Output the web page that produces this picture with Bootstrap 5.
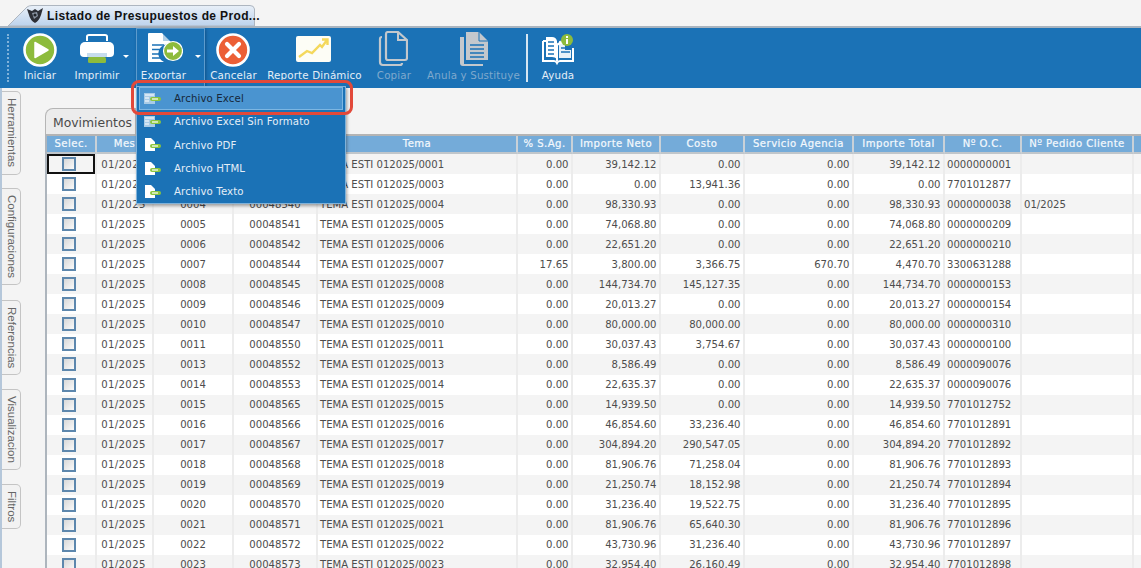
<!DOCTYPE html>
<html lang="es">
<head>
<meta charset="utf-8">
<title>Listado de Presupuestos</title>
<link href="https://cdn.jsdelivr.net/npm/bootstrap@5.3.0/dist/css/bootstrap.min.css" rel="stylesheet">
<style>
html,body{height:568px;overflow:hidden}
body{background:#f4f4f4;font-family:"DejaVu Sans","Noto Sans",sans-serif;font-size:10.3px;color:#4d4d4d}
.tabstrip{height:26px;padding-top:5px;padding-left:8px}
.doc-tab{position:relative;width:247px;height:21px}
.doc-tab svg.shape{position:absolute;inset:0}
.doc-tab .tab-logo{position:absolute;left:19px;top:3px}
.doc-tab .tab-title{position:absolute;left:39px;top:3px;font:bold 12px/16px "Liberation Sans",sans-serif;color:#111;letter-spacing:.36px;white-space:nowrap}
.toolbar{height:62px;background:#1b72b6;border-top:2px solid #a9b4bf;padding-left:7px;color:#fff}
.gripper{width:2px;height:48px;margin-top:6px;margin-right:5px;border-left:2px dotted #7fb2da}
.tool{position:relative;height:60px;text-align:center;flex:none}
.tool svg.ico{display:block;position:absolute;top:5px}
.tool .tlabel{position:absolute;left:0;right:0;top:40px;line-height:14px;white-space:nowrap;color:#e4eef7;letter-spacing:.15px}
.tool.off .tlabel{color:#7fa9cd}
.tool .drop{position:absolute;top:27px;width:0;height:0;border-left:3px solid transparent;border-right:3px solid transparent;border-top:3px solid #fff}
.tool.open{border:1px solid #5d9bcd;border-bottom:0;box-shadow:1px 1px 3px rgba(0,40,80,.45)}
.w-ini{width:52px}.w-imp{width:70px}.w-exp{width:69px}.w-can{width:57px}.w-rep{width:105px}.w-cop{width:54px}.w-anu{width:105px}.w-ayu{width:60px}
.tsep{width:2px;height:48px;margin-top:6px;background:#d7e6f2;flex:none}
.menu-export{position:absolute;left:-1px;top:57px;width:210px;min-width:0;height:118px;margin:0;padding:0 2px 1px;border:1px solid #7fb2da;border-radius:0;background:#1b72b6;box-shadow:1px 2px 3px rgba(0,0,0,.35);font-size:10.2px;letter-spacing:.12px;z-index:5;text-align:left}
.menu-export .dropdown-item{display:flex;align-items:center;height:23.3px;padding:0 0 0 5px;color:#e4eef7;gap:12px;white-space:nowrap}
.menu-export .dropdown-item.active{background:#4a94d0;color:#16283a;box-shadow:inset 0 0 0 1px #7db6e2}
.red-mark{position:absolute;left:-6px;top:-7px;width:222px;height:35px;border:3px solid #e2493a;border-radius:8px;pointer-events:none}
.workarea{height:480px}
.rail{width:22px;border-left:2px solid #b5c7da;padding-top:3px;flex:none}
.vtab{width:19px;writing-mode:vertical-rl;text-align:center;font:11.5px "Liberation Sans",sans-serif;color:#666;background:#f2f2f2;border:1px solid #c4c4c4;border-left:0;border-radius:0 5px 5px 0;line-height:17px}
.v1{height:84px;margin-bottom:13px}.v2{height:97px;margin-bottom:15px}.v3{height:75px;margin-bottom:14px}.v4{height:81px;margin-bottom:14px}.v5{height:45px}
.panel-area{padding-left:23px;padding-top:20px;flex:1;min-width:0}
.mov-tab{width:91px;height:27px;background:#ececec;border:1px solid #b5b5b5;border-bottom:0;border-radius:8px 0 0 0;font-size:12.4px;line-height:28px;padding-left:7px;color:#4a4a4a}
.grid-wrap{border-left:2px solid #adb5bd;border-top:2px solid #b4b4b4;overflow:hidden;height:460px;margin-top:-1px}
.grid{table-layout:fixed;width:1187px;margin:0;font-size:10.1px;border-collapse:separate;border-spacing:0}
.table.grid>*>*>*{padding:0;border:0;box-shadow:none}
.table.grid thead th{height:17px;background:#74abd9;color:#f4f9fd;font-weight:400;text-align:center;line-height:16px;border-right:2px solid #c9d1d8;border-bottom:2px solid #c0c6cb;white-space:nowrap;letter-spacing:.45px;-webkit-text-stroke:.2px #f4f9fd}
.table.grid tbody td{height:20.05px;line-height:19px;color:#4d4d4d;background:#fff;border-right:2px solid #ececec;white-space:nowrap;vertical-align:middle}
.table.grid tbody tr:nth-child(odd) td{background:#f4f4f4}
.table.grid td.c{text-align:center}
.table.grid td.c:nth-child(2){letter-spacing:.35px;padding-right:2px}
.table.grid td.c:first-child{padding-right:4px}
.table.grid td.n{text-align:right;padding-right:2.500px}
.table.grid td.l{padding-left:2px}
.table.grid td.lp{padding-left:2px}
.chk{display:block;width:14px;height:14px;margin:0 auto;border:2px solid #5d87ad;background:linear-gradient(135deg,#d8d8d8,#fafafa)}
.table.grid tbody tr:first-child td:first-child{box-shadow:inset 0 0 0 2px #111}
</style>
</head>
<body>
<svg width="0" height="0" class="d-block position-absolute">
<symbol id="m-sheet" viewBox="0 0 18 14">
<rect x="0" y="1" width="11" height="11" fill="#a9cbe6"/>
<path d="M1 3h9M1 6h4M1 9h4" stroke="#fff" stroke-width="1.2"/>
<rect x="6" y="5" width="11" height="4" rx="2" fill="#8cc63f"/><rect x="8" y="6.4" width="6" height="1.2" fill="#fff"/>
</symbol>
<symbol id="m-doc" viewBox="0 0 18 16">
<path d="M1 1h6l4 4v9H1z" fill="#fff"/>
<rect x="6" y="7" width="11" height="4" rx="2" fill="#8cc63f"/><rect x="8" y="8.4" width="6" height="1.2" fill="#fff"/>
</symbol>
</svg>

<div class="tabstrip d-flex">
  <div class="doc-tab">
    <svg class="shape" width="247" height="21" viewBox="0 0 247 21"><defs><linearGradient id="tg" x1="0" y1="0" x2="0" y2="1"><stop offset="0" stop-color="#e9f0f8"/><stop offset="1" stop-color="#bcd2ec"/></linearGradient></defs><path d="M0 21 L19 2 Q21 .5 24 .5 H242 Q246 .5 246.5 4 V21 Z" fill="url(#tg)" stroke="#aeb6c0"/></svg>
    <svg class="tab-logo" width="16" height="15" viewBox="0 0 16 15"><path d="M0 1 L5 3 L8 1 L11 3 L16 0 L14 7 Q12 13 8 15 Q3 12 2 7Z" fill="#2d2f36"/><path d="M5 5 L10 4 L11 8 L7 11Z" fill="#8d97a6"/><circle cx="8" cy="7" r="1.6" fill="#22252b"/></svg>
    <span class="tab-title">Listado de Presupuestos de Prod...</span>
  </div>
</div>

<div class="toolbar d-flex">
  <div class="gripper"></div>
  <div class="tool w-ini">
    <svg class="ico" style="left:9px" width="34" height="34" viewBox="0 0 34 34"><circle cx="17" cy="17" r="15.5" fill="#8dbb3c" stroke="#fff" stroke-width="2.6"/><path d="M12 9.5 L25 17 L12 24.5Z" fill="#fff" stroke="#fff" stroke-width="1.5" stroke-linejoin="round"/></svg>
    <div class="tlabel">Iniciar</div>
  </div>
  <div class="tool w-imp">
    <svg class="ico" style="left:13px" width="36" height="34" viewBox="0 0 36 34"><path d="M8 8V3.5Q8 2 10 2H26Q28 2 28 3.5V8" fill="none" stroke="#fff" stroke-width="2"/><rect x="1" y="9" width="34" height="14" rx="5" fill="#fff"/><rect x="1" y="15" width="34" height="9" rx="4" fill="#fff"/><rect x="9" y="24" width="18" height="6" rx="1.5" fill="#8dbb3c"/><rect x="8" y="20" width="20" height="4" fill="#1b72b6" opacity=".25"/></svg>
    <div class="tlabel" style="right:8px">Imprimir</div>
    <span class="drop" style="left:57px"></span>
  </div>
  <div class="tool w-exp open">
    <svg class="ico" style="left:10px;top:3px" width="36" height="36" viewBox="0 0 36 36"><path d="M1 2Q1 1 2 1H15L24 10V13A9 9 0 0 0 17 30H2Q1 30 1 29Z" fill="#fff"/><path d="M16 1V9H24Z" fill="#1b72b6" opacity=".35"/><path d="M5 13h12M5 17.5h10M5 22h9M5 26h9" stroke="#1b72b6" stroke-width="1.6"/><circle cx="26" cy="19" r="9.5" fill="#8dbb3c" stroke="#fff" stroke-width="1.2"/><path d="M20 17.5h6V14l6 5-6 5v-3.5h-6z" fill="#fff"/></svg>
    <div class="tlabel" style="right:14px;top:39px">Exportar</div>
    <span class="drop" style="left:58px;top:26px"></span>
    <ul class="dropdown-menu show menu-export">
      <li><a class="dropdown-item active" href="#"><svg width="18" height="14"><use href="#m-sheet"/></svg>Archivo Excel</a></li>
      <li><a class="dropdown-item" href="#"><svg width="18" height="14"><use href="#m-sheet"/></svg>Archivo Excel Sin Formato</a></li>
      <li><a class="dropdown-item" href="#"><svg width="18" height="16"><use href="#m-doc"/></svg>Archivo PDF</a></li>
      <li><a class="dropdown-item" href="#"><svg width="18" height="16"><use href="#m-doc"/></svg>Archivo HTML</a></li>
      <li><a class="dropdown-item" href="#"><svg width="18" height="16"><use href="#m-doc"/></svg>Archivo Texto</a></li>
      <li class="red-mark"></li>
    </ul>
  </div>
  <div class="tool w-can">
    <svg class="ico" style="left:11px" width="34" height="34" viewBox="0 0 34 34"><circle cx="17" cy="17" r="15.5" fill="#ec5f36" stroke="#fff" stroke-width="2.6"/><path d="M11 11 L23 23 M23 11 L11 23" stroke="#fff" stroke-width="4.2" stroke-linecap="round"/></svg>
    <div class="tlabel">Cancelar</div>
  </div>
  <div class="tool w-rep">
    <svg class="ico" style="left:34px;top:8px" width="35" height="27" viewBox="0 0 35 27"><rect width="35" height="26" rx="2" fill="#fdfdf6"/><path d="M3 21 L11 15 L16 17 L24 9 L26 11 L31 4 M26 3.500 L31.500 3.500 L31.500 9" fill="none" stroke="#f4d85c" stroke-width="2.400"/></svg>
    <div class="tlabel">Reporte Dinámico</div>
  </div>
  <div class="tool w-cop off">
    <svg class="ico" style="left:11px;top:3px" width="30" height="36" viewBox="0 0 30 36"><path d="M8 3Q8 1 10 1H20L29 9V27Q29 29 27 29H10Q8 29 8 27Z" fill="none" stroke="#c3c8cd" stroke-width="2.200"/><path d="M20 1V9H29" fill="none" stroke="#c3c8cd" stroke-width="2"/><path d="M4 6Q2 6 2 8V31Q2 34 5 34H22Q24 34 24 32" fill="none" stroke="#c3c8cd" stroke-width="2.200"/></svg>
    <div class="tlabel">Copiar</div>
  </div>
  <div class="tool w-anu off">
    <svg class="ico" style="left:38px;top:3px" width="30" height="36" viewBox="0 0 30 36"><path d="M7 1H20L29 10V29H7Z" fill="#c3c8cd"/><path d="M1 6H5V33H24V35H4Q1 35 1 32Z" fill="#c3c8cd"/><path d="M20 1V10H29" fill="none" stroke="#1b72b6" stroke-width="1"/><path d="M11 14H25M11 18H25M11 22H25M11 26H25" stroke="#1b72b6" stroke-width="1.500"/></svg>
    <div class="tlabel">Anula y Sustituye</div>
  </div>
  <div class="tsep"></div>
  <div class="tool w-ayu">
    <svg class="ico" style="left:13px;top:6px" width="34" height="34" viewBox="0 0 34 34"><path d="M2 7V27H13Q15 27 16 29Q17 27 19 27H32V14M2 7H11Q15 7 16 11V27M16 11Q18 9 22 8" fill="none" stroke="#fff" stroke-width="2"/><path d="M5 3H11Q15 3 16 7V25Q14 23 11 23H5Z" fill="#fff"/><path d="M7 8H13M7 12H13M7 16H13M7 20H13M20 13H29M20 17H29M20 21H29" stroke="#1b72b6" stroke-width="1.400"/><path d="M18 7 L24 6 V24H18Z M24 16H30V24H24Z" fill="#fff" opacity=".9"/><path d="M20 14H29M20 18H29" stroke="#1b72b6" stroke-width="1.400"/><circle cx="26" cy="6" r="6" fill="#8dbb3c"/><rect x="25" y="5" width="2" height="5" fill="#fff"/><rect x="25" y="2" width="2" height="2" fill="#fff"/></svg>
    <div class="tlabel">Ayuda</div>
  </div>
</div>

<div class="workarea d-flex">
  <div class="rail">
    <div class="vtab v1">Herramientas</div>
    <div class="vtab v2">Configuraciones</div>
    <div class="vtab v3">Referencias</div>
    <div class="vtab v4">Visualizacion</div>
    <div class="vtab v5">Filtros</div>
  </div>
  <div class="panel-area">
    <div class="mov-tab">Movimientos</div>
    <div class="grid-wrap">
      <table class="table grid">
        <colgroup><col style="width:50px"><col style="width:57px"><col style="width:80px"><col style="width:84px"><col style="width:200px"><col style="width:55px"><col style="width:88px"><col style="width:84px"><col style="width:109px"><col style="width:91px"><col style="width:77px"><col style="width:112px"><col style="width:100px"></colgroup>
        <thead><tr><th>Selec.</th><th>Mes</th><th>Nº</th><th>Presupuesto</th><th>Tema</th><th>% S.Ag.</th><th>Importe Neto</th><th>Costo</th><th>Servicio Agencia</th><th>Importe Total</th><th>Nº O.C.</th><th>Nº Pedido Cliente</th><th></th></tr></thead>
        <tbody>
<tr><td class="c"><span class="chk"></span></td><td class="c">01/2025</td><td class="c">0001</td><td class="c">00048537</td><td class="l">TEMA ESTI 012025/0001</td><td class="n">0.00</td><td class="n">39,142.12</td><td class="n">0.00</td><td class="n">0.00</td><td class="n">39,142.12</td><td class="l">0000000001</td><td class="lp"></td><td></td></tr>
<tr><td class="c"><span class="chk"></span></td><td class="c">01/2025</td><td class="c">0003</td><td class="c">00048539</td><td class="l">TEMA ESTI 012025/0003</td><td class="n">0.00</td><td class="n">0.00</td><td class="n">13,941.36</td><td class="n">0.00</td><td class="n">0.00</td><td class="l">7701012877</td><td class="lp"></td><td></td></tr>
<tr><td class="c"><span class="chk"></span></td><td class="c">01/2025</td><td class="c">0004</td><td class="c">00048540</td><td class="l">TEMA ESTI 012025/0004</td><td class="n">0.00</td><td class="n">98,330.93</td><td class="n">0.00</td><td class="n">0.00</td><td class="n">98,330.93</td><td class="l">0000000038</td><td class="lp">01/2025</td><td></td></tr>
<tr><td class="c"><span class="chk"></span></td><td class="c">01/2025</td><td class="c">0005</td><td class="c">00048541</td><td class="l">TEMA ESTI 012025/0005</td><td class="n">0.00</td><td class="n">74,068.80</td><td class="n">0.00</td><td class="n">0.00</td><td class="n">74,068.80</td><td class="l">0000000209</td><td class="lp"></td><td></td></tr>
<tr><td class="c"><span class="chk"></span></td><td class="c">01/2025</td><td class="c">0006</td><td class="c">00048542</td><td class="l">TEMA ESTI 012025/0006</td><td class="n">0.00</td><td class="n">22,651.20</td><td class="n">0.00</td><td class="n">0.00</td><td class="n">22,651.20</td><td class="l">0000000210</td><td class="lp"></td><td></td></tr>
<tr><td class="c"><span class="chk"></span></td><td class="c">01/2025</td><td class="c">0007</td><td class="c">00048544</td><td class="l">TEMA ESTI 012025/0007</td><td class="n">17.65</td><td class="n">3,800.00</td><td class="n">3,366.75</td><td class="n">670.70</td><td class="n">4,470.70</td><td class="l">3300631288</td><td class="lp"></td><td></td></tr>
<tr><td class="c"><span class="chk"></span></td><td class="c">01/2025</td><td class="c">0008</td><td class="c">00048545</td><td class="l">TEMA ESTI 012025/0008</td><td class="n">0.00</td><td class="n">144,734.70</td><td class="n">145,127.35</td><td class="n">0.00</td><td class="n">144,734.70</td><td class="l">0000000153</td><td class="lp"></td><td></td></tr>
<tr><td class="c"><span class="chk"></span></td><td class="c">01/2025</td><td class="c">0009</td><td class="c">00048546</td><td class="l">TEMA ESTI 012025/0009</td><td class="n">0.00</td><td class="n">20,013.27</td><td class="n">0.00</td><td class="n">0.00</td><td class="n">20,013.27</td><td class="l">0000000154</td><td class="lp"></td><td></td></tr>
<tr><td class="c"><span class="chk"></span></td><td class="c">01/2025</td><td class="c">0010</td><td class="c">00048547</td><td class="l">TEMA ESTI 012025/0010</td><td class="n">0.00</td><td class="n">80,000.00</td><td class="n">80,000.00</td><td class="n">0.00</td><td class="n">80,000.00</td><td class="l">0000000310</td><td class="lp"></td><td></td></tr>
<tr><td class="c"><span class="chk"></span></td><td class="c">01/2025</td><td class="c">0011</td><td class="c">00048550</td><td class="l">TEMA ESTI 012025/0011</td><td class="n">0.00</td><td class="n">30,037.43</td><td class="n">3,754.67</td><td class="n">0.00</td><td class="n">30,037.43</td><td class="l">0000000100</td><td class="lp"></td><td></td></tr>
<tr><td class="c"><span class="chk"></span></td><td class="c">01/2025</td><td class="c">0013</td><td class="c">00048552</td><td class="l">TEMA ESTI 012025/0013</td><td class="n">0.00</td><td class="n">8,586.49</td><td class="n">0.00</td><td class="n">0.00</td><td class="n">8,586.49</td><td class="l">0000090076</td><td class="lp"></td><td></td></tr>
<tr><td class="c"><span class="chk"></span></td><td class="c">01/2025</td><td class="c">0014</td><td class="c">00048553</td><td class="l">TEMA ESTI 012025/0014</td><td class="n">0.00</td><td class="n">22,635.37</td><td class="n">0.00</td><td class="n">0.00</td><td class="n">22,635.37</td><td class="l">0000090076</td><td class="lp"></td><td></td></tr>
<tr><td class="c"><span class="chk"></span></td><td class="c">01/2025</td><td class="c">0015</td><td class="c">00048565</td><td class="l">TEMA ESTI 012025/0015</td><td class="n">0.00</td><td class="n">14,939.50</td><td class="n">0.00</td><td class="n">0.00</td><td class="n">14,939.50</td><td class="l">7701012752</td><td class="lp"></td><td></td></tr>
<tr><td class="c"><span class="chk"></span></td><td class="c">01/2025</td><td class="c">0016</td><td class="c">00048566</td><td class="l">TEMA ESTI 012025/0016</td><td class="n">0.00</td><td class="n">46,854.60</td><td class="n">33,236.40</td><td class="n">0.00</td><td class="n">46,854.60</td><td class="l">7701012891</td><td class="lp"></td><td></td></tr>
<tr><td class="c"><span class="chk"></span></td><td class="c">01/2025</td><td class="c">0017</td><td class="c">00048567</td><td class="l">TEMA ESTI 012025/0017</td><td class="n">0.00</td><td class="n">304,894.20</td><td class="n">290,547.05</td><td class="n">0.00</td><td class="n">304,894.20</td><td class="l">7701012892</td><td class="lp"></td><td></td></tr>
<tr><td class="c"><span class="chk"></span></td><td class="c">01/2025</td><td class="c">0018</td><td class="c">00048568</td><td class="l">TEMA ESTI 012025/0018</td><td class="n">0.00</td><td class="n">81,906.76</td><td class="n">71,258.04</td><td class="n">0.00</td><td class="n">81,906.76</td><td class="l">7701012893</td><td class="lp"></td><td></td></tr>
<tr><td class="c"><span class="chk"></span></td><td class="c">01/2025</td><td class="c">0019</td><td class="c">00048569</td><td class="l">TEMA ESTI 012025/0019</td><td class="n">0.00</td><td class="n">21,250.74</td><td class="n">18,152.98</td><td class="n">0.00</td><td class="n">21,250.74</td><td class="l">7701012894</td><td class="lp"></td><td></td></tr>
<tr><td class="c"><span class="chk"></span></td><td class="c">01/2025</td><td class="c">0020</td><td class="c">00048570</td><td class="l">TEMA ESTI 012025/0020</td><td class="n">0.00</td><td class="n">31,236.40</td><td class="n">19,522.75</td><td class="n">0.00</td><td class="n">31,236.40</td><td class="l">7701012895</td><td class="lp"></td><td></td></tr>
<tr><td class="c"><span class="chk"></span></td><td class="c">01/2025</td><td class="c">0021</td><td class="c">00048571</td><td class="l">TEMA ESTI 012025/0021</td><td class="n">0.00</td><td class="n">81,906.76</td><td class="n">65,640.30</td><td class="n">0.00</td><td class="n">81,906.76</td><td class="l">7701012896</td><td class="lp"></td><td></td></tr>
<tr><td class="c"><span class="chk"></span></td><td class="c">01/2025</td><td class="c">0022</td><td class="c">00048572</td><td class="l">TEMA ESTI 012025/0022</td><td class="n">0.00</td><td class="n">43,730.96</td><td class="n">31,236.40</td><td class="n">0.00</td><td class="n">43,730.96</td><td class="l">7701012897</td><td class="lp"></td><td></td></tr>
<tr><td class="c"><span class="chk"></span></td><td class="c">01/2025</td><td class="c">0023</td><td class="c">00048573</td><td class="l">TEMA ESTI 012025/0023</td><td class="n">0.00</td><td class="n">32,954.40</td><td class="n">26,160.49</td><td class="n">0.00</td><td class="n">32,954.40</td><td class="l">7701012898</td><td class="lp"></td><td></td></tr>
        </tbody>
      </table>
    </div>
  </div>
</div>
<script src="https://cdn.jsdelivr.net/npm/bootstrap@5.3.0/dist/js/bootstrap.bundle.min.js"></script>
</body>
</html>
